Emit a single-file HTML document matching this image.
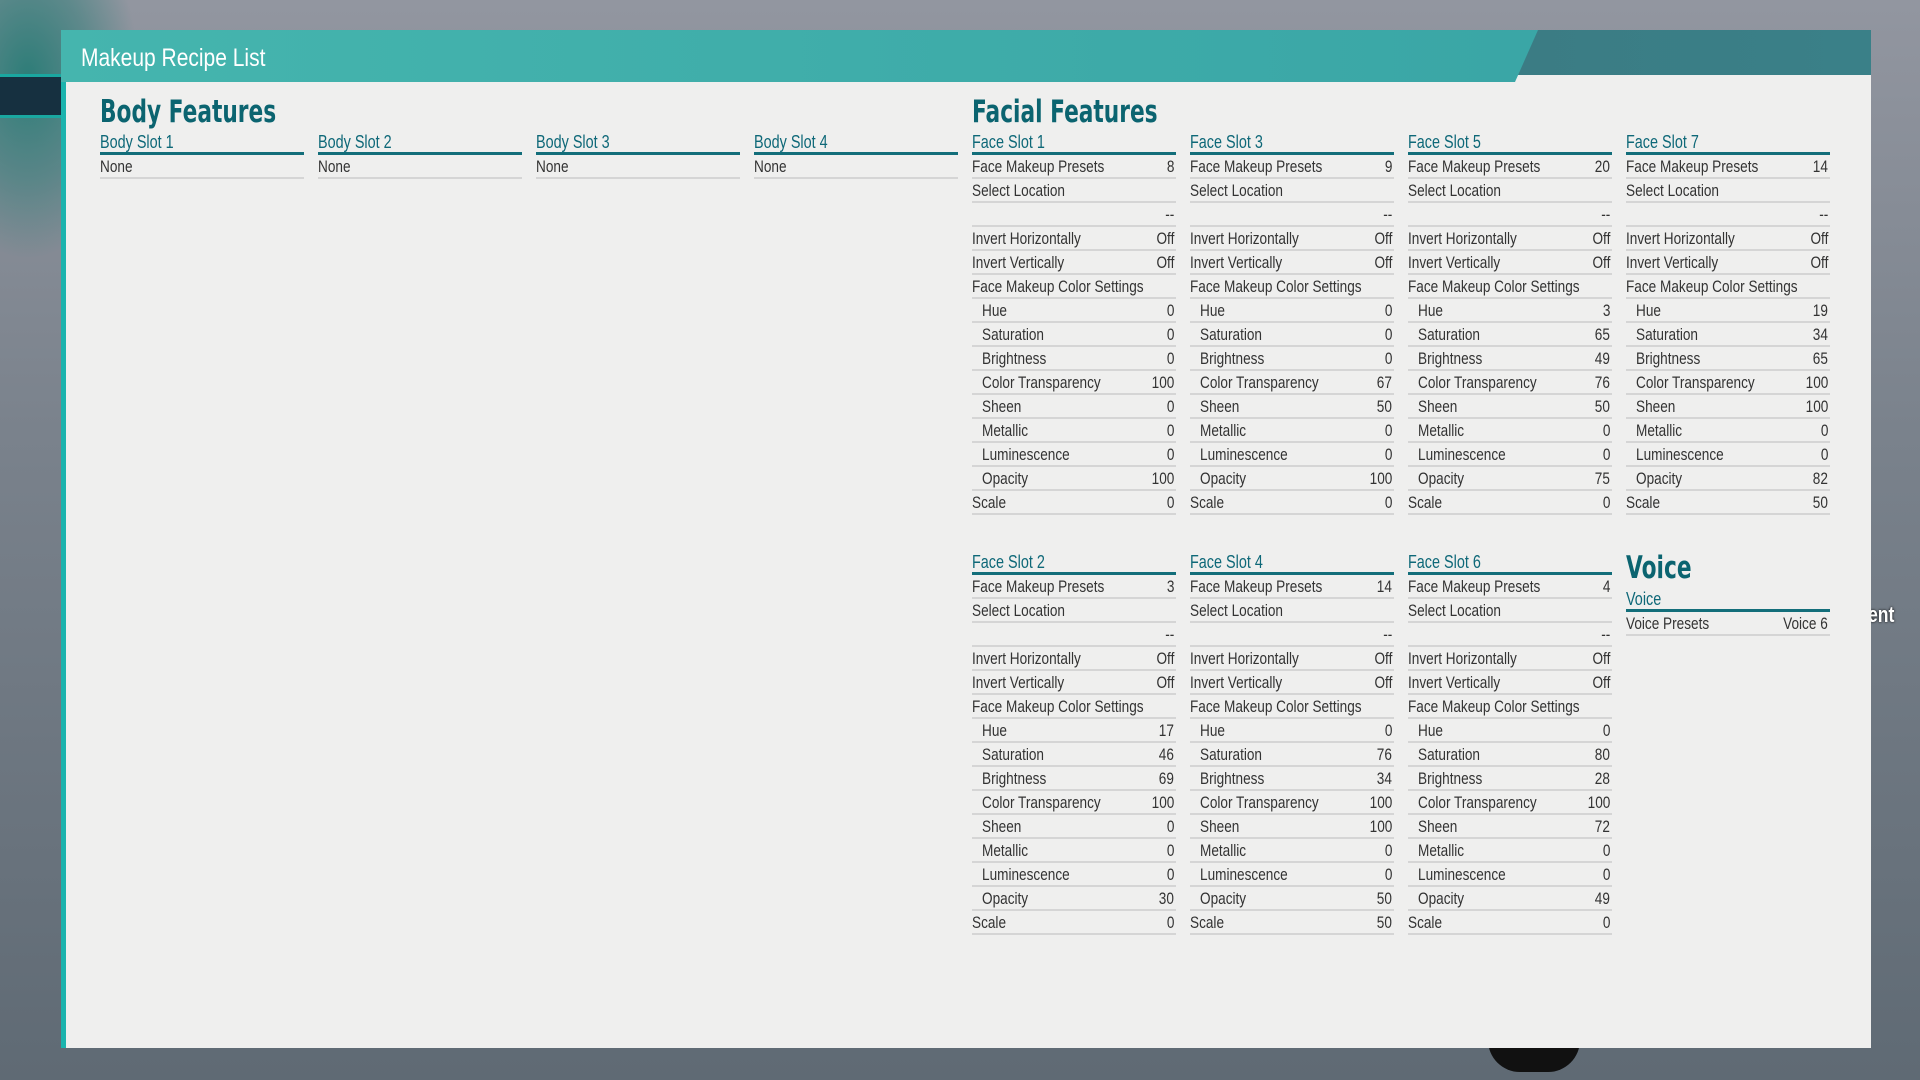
<!DOCTYPE html>
<html><head><meta charset="utf-8"><style>
*{margin:0;padding:0;box-sizing:border-box}
body{width:1920px;height:1080px;overflow:hidden;position:relative;font-family:"Liberation Sans",sans-serif;
background:linear-gradient(180deg,#9296a0 0%,#7a828c 40%,#5f6a74 100%)}
.splash{position:absolute;left:0;top:0;width:140px;height:260px;background:radial-gradient(ellipse at 20% 30%,#2d7d78 0%,rgba(45,125,120,.5) 40%,rgba(0,0,0,0) 70%)}
.navy{position:absolute;left:0;top:74px;width:62px;height:44px;background:#163040;border-top:3px solid #1aa7a0;border-bottom:3px solid #1aa7a0}
.blob{position:absolute;left:1488px;top:1040px;width:92px;height:32px;background:#111;border-radius:0 0 40px 40px}
.panel{position:absolute;left:61px;top:75px;width:1810px;height:973px;background:#efefee;border-left:5px solid #1bb3ad}
.hdr{position:absolute;left:61px;top:30px;width:1810px;height:45px;background:linear-gradient(90deg,#3f6272,#3c7880 60%,#3a8088)}
.hdrt{position:absolute;left:61px;top:30px;width:1477px;height:52px;background:linear-gradient(90deg,#45b5ae,#3aa6a6);clip-path:polygon(0 0,100% 0,1454px 100%,0 100%)}
.title{position:absolute;left:81px;top:43px;color:#fff;font-size:25px;line-height:30px;transform:scaleX(.84);transform-origin:left}
.h1{position:absolute;font-family:"DejaVu Sans","Liberation Sans",sans-serif;font-weight:bold;color:#0b6470;font-size:31px;line-height:34px;transform:scaleX(.7);transform-origin:left;white-space:nowrap}
.col{position:absolute;width:204px;color:#333;font-size:17px;white-space:nowrap}
.sh{height:23px;border-bottom:3px solid #136e7a;color:#0e6878;font-size:18px;line-height:20px}
.sh span,.r span{display:inline-block;transform:scaleX(.8);transform-origin:left}
.r span+span{transform-origin:right}
.r{height:24px;border-bottom:2px solid #d5d5d5;display:flex;justify-content:space-between;line-height:23px;padding-right:2px}
.i{padding-left:10px}
.ent{position:absolute;left:1868px;top:602px;color:#fff;font-size:22px;font-weight:bold;text-shadow:0 0 3px #000;transform:scaleX(.8);transform-origin:left}
</style></head><body>
<div class="splash"></div>
<div class="navy"></div>
<div class="blob"></div>
<div class="ent">ent</div>
<div class="panel"></div>
<div class="hdr"></div>
<div class="hdrt"></div>
<div class="title">Makeup Recipe List</div>

<div class="h1" style="left:100px;top:95px">Body Features</div>
<div class="h1" style="left:972px;top:95px">Facial Features</div>
<div class="h1" style="left:1626px;top:551px">Voice</div>

<div class="col" style="left:100px;top:132px"><div class="sh"><span>Body Slot 1</span></div><div class="r"><span>None</span></div></div>
<div class="col" style="left:318px;top:132px"><div class="sh"><span>Body Slot 2</span></div><div class="r"><span>None</span></div></div>
<div class="col" style="left:536px;top:132px"><div class="sh"><span>Body Slot 3</span></div><div class="r"><span>None</span></div></div>
<div class="col" style="left:754px;top:132px"><div class="sh"><span>Body Slot 4</span></div><div class="r"><span>None</span></div></div>

<div class="col" style="left:1626px;top:589px"><div class="sh"><span>Voice</span></div><div class="r"><span>Voice Presets</span><span>Voice 6</span></div></div>

<div id="faces"></div>
<script>
var data=[
["Face Slot 1",972,132,[8,"Off","Off",0,0,0,100,0,0,0,100,0]],
["Face Slot 3",1190,132,[9,"Off","Off",0,0,0,67,50,0,0,100,0]],
["Face Slot 5",1408,132,[20,"Off","Off",3,65,49,76,50,0,0,75,0]],
["Face Slot 7",1626,132,[14,"Off","Off",19,34,65,100,100,0,0,82,50]],
["Face Slot 2",972,552,[3,"Off","Off",17,46,69,100,0,0,0,30,0]],
["Face Slot 4",1190,552,[14,"Off","Off",0,76,34,100,100,0,0,50,50]],
["Face Slot 6",1408,552,[4,"Off","Off",0,80,28,100,72,0,0,49,0]]];
var h="";
data.forEach(function(d){var v=d[3];
h+='<div class="col" style="left:'+d[1]+'px;top:'+d[2]+'px"><div class="sh"><span>'+d[0]+'</span></div>';
function r(a,b,ind){h+='<div class="r'+(ind?' i':'')+'"><span>'+a+'</span><span>'+b+'</span></div>';}
r("Face Makeup Presets",v[0]);r("Select Location","");r("","--");
r("Invert Horizontally",v[1]);r("Invert Vertically",v[2]);r("Face Makeup Color Settings","");
var n=["Hue","Saturation","Brightness","Color Transparency","Sheen","Metallic","Luminescence","Opacity"];
for(var k=0;k<8;k++)r(n[k],v[3+k],1);
r("Scale",v[11]);h+='</div>';});
document.getElementById("faces").innerHTML=h;
</script>
</body></html>
